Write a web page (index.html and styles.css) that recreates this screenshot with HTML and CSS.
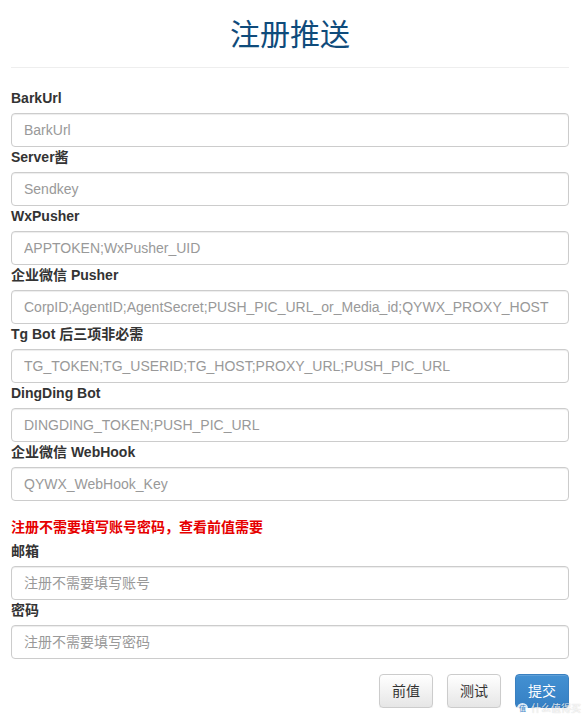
FILE: index.html
```html
<!DOCTYPE html>
<html lang="zh">
<head>
<meta charset="utf-8">
<title>注册推送</title>
<link rel="stylesheet" href="styles.css">
</head>
<body>
<div class="container">
  <h2 class="title">注册推送</h2>
  <hr class="divider">
  <form class="form">
    <div class="group"><label class="label">BarkUrl</label><input class="input" placeholder="BarkUrl"></div>
    <div class="group"><label class="label">Server酱</label><input class="input" placeholder="Sendkey"></div>
    <div class="group"><label class="label">WxPusher</label><input class="input" placeholder="APPTOKEN;WxPusher_UID"></div>
    <div class="group"><label class="label">企业微信 Pusher</label><input class="input" placeholder="CorpID;AgentID;AgentSecret;PUSH_PIC_URL_or_Media_id;QYWX_PROXY_HOST"></div>
    <div class="group"><label class="label">Tg Bot 后三项非必需</label><input class="input" placeholder="TG_TOKEN;TG_USERID;TG_HOST;PROXY_URL;PUSH_PIC_URL"></div>
    <div class="group"><label class="label">DingDing Bot</label><input class="input" placeholder="DINGDING_TOKEN;PUSH_PIC_URL"></div>
    <div class="group"><label class="label">企业微信 WebHook</label><input class="input" placeholder="QYWX_WebHook_Key"></div>
    <p class="notice">注册不需要填写账号密码，查看前值需要</p>
    <div class="group"><label class="label">邮箱</label><input class="input" placeholder="注册不需要填写账号"></div>
    <div class="group"><label class="label">密码</label><input class="input" type="password" placeholder="注册不需要填写密码"></div>
    <div class="actions">
      <button type="button" class="btn">前值</button>
      <button type="button" class="btn">测试</button>
      <button type="button" class="btn btn-primary">提交</button>
    </div>
  </form>
</div>
<div class="watermark"><span class="wm-logo">值</span>什么值得买</div>
</body>
</html>
```
FILE: styles.css
```css
html, body {
  margin: 0;
  padding: 0;
  background: #fff;
}
body {
  font-family: "Liberation Sans", Arial, "Noto Sans CJK SC", sans-serif;
  font-size: 14px;
  line-height: 20px;
  color: #333;
}
.container {
  padding: 0 17px 0 11px;
}
.title {
  margin: 14px 0 0;
  font-family: "Noto Sans CJK SC", sans-serif;
  font-weight: 400;
  font-size: 30px;
  line-height: 36px;
  text-align: center;
  color: #0f4b7b;
}
.divider {
  margin: 17px 0 0;
  border: 0;
  border-top: 1px solid #eee;
  height: 0;
}
.form {
  margin: 20px 0 0;
}
.group {
  display: flex;
  flex-direction: column;
}
.label {
  display: block;
  font-weight: 700;
  line-height: 20px;
  margin-bottom: 5px;
  font-family: "Liberation Sans", Arial, "Noto Sans CJK SC", sans-serif;
}
.input {
  display: block;
  box-sizing: border-box;
  width: 100%;
  height: 34px;
  margin: 0;
  padding: 6px 12px;
  font-family: "Liberation Sans", Arial, "Noto Sans CJK SC", sans-serif;
  font-size: 14px;
  line-height: 20px;
  color: #555;
  background: #fff;
  border: 1px solid #ccc;
  border-radius: 4px;
  box-shadow: inset 0 1px 1px rgba(0,0,0,.075);
  outline: none;
}
.input::placeholder {
  color: #999;
  opacity: 1;
}
.notice {
  margin: 15px 0 5px;
  font-weight: 700;
  color: #e60000;
  font-family: "Noto Sans CJK SC", sans-serif;
  line-height: 20px;
}
.actions {
  display: flex;
  justify-content: flex-end;
  gap: 14px;
  margin-top: 15px;
}
.btn {
  box-sizing: border-box;
  width: 54px;
  height: 34px;
  padding: 0 0 2px;
  font-family: "Noto Sans CJK SC", sans-serif;
  font-size: 14px;
  line-height: 16px;
  color: #333;
  border: 1px solid #ccc;
  border-radius: 4px;
  background: linear-gradient(to bottom, #fff 0%, #e6e6e6 100%);
  box-shadow: inset 0 1px 0 rgba(255,255,255,.15), 0 1px 1px rgba(0,0,0,.075);
}
.btn-primary {
  color: #fff;
  border-color: #3a80c0;
  background: linear-gradient(to bottom, #4390d2 0%, #3680c4 100%);
}
.watermark {
  position: absolute;
  left: 517px;
  top: 702px;
  display: flex;
  align-items: center;
  gap: 3px;
  font-family: "Noto Sans CJK SC", sans-serif;
  font-size: 10px;
  line-height: 12px;
  color: rgba(255,255,255,.85);
  text-shadow: 0 0 1px rgba(0,0,0,.25);
  white-space: nowrap;
}
.wm-logo {
  display: inline-block;
  width: 11px;
  height: 11px;
  border-radius: 50%;
  background: rgba(255,255,255,.85);
  color: #3680c4;
  font-size: 7px;
  line-height: 11px;
  text-align: center;
  text-shadow: none;
}
```
